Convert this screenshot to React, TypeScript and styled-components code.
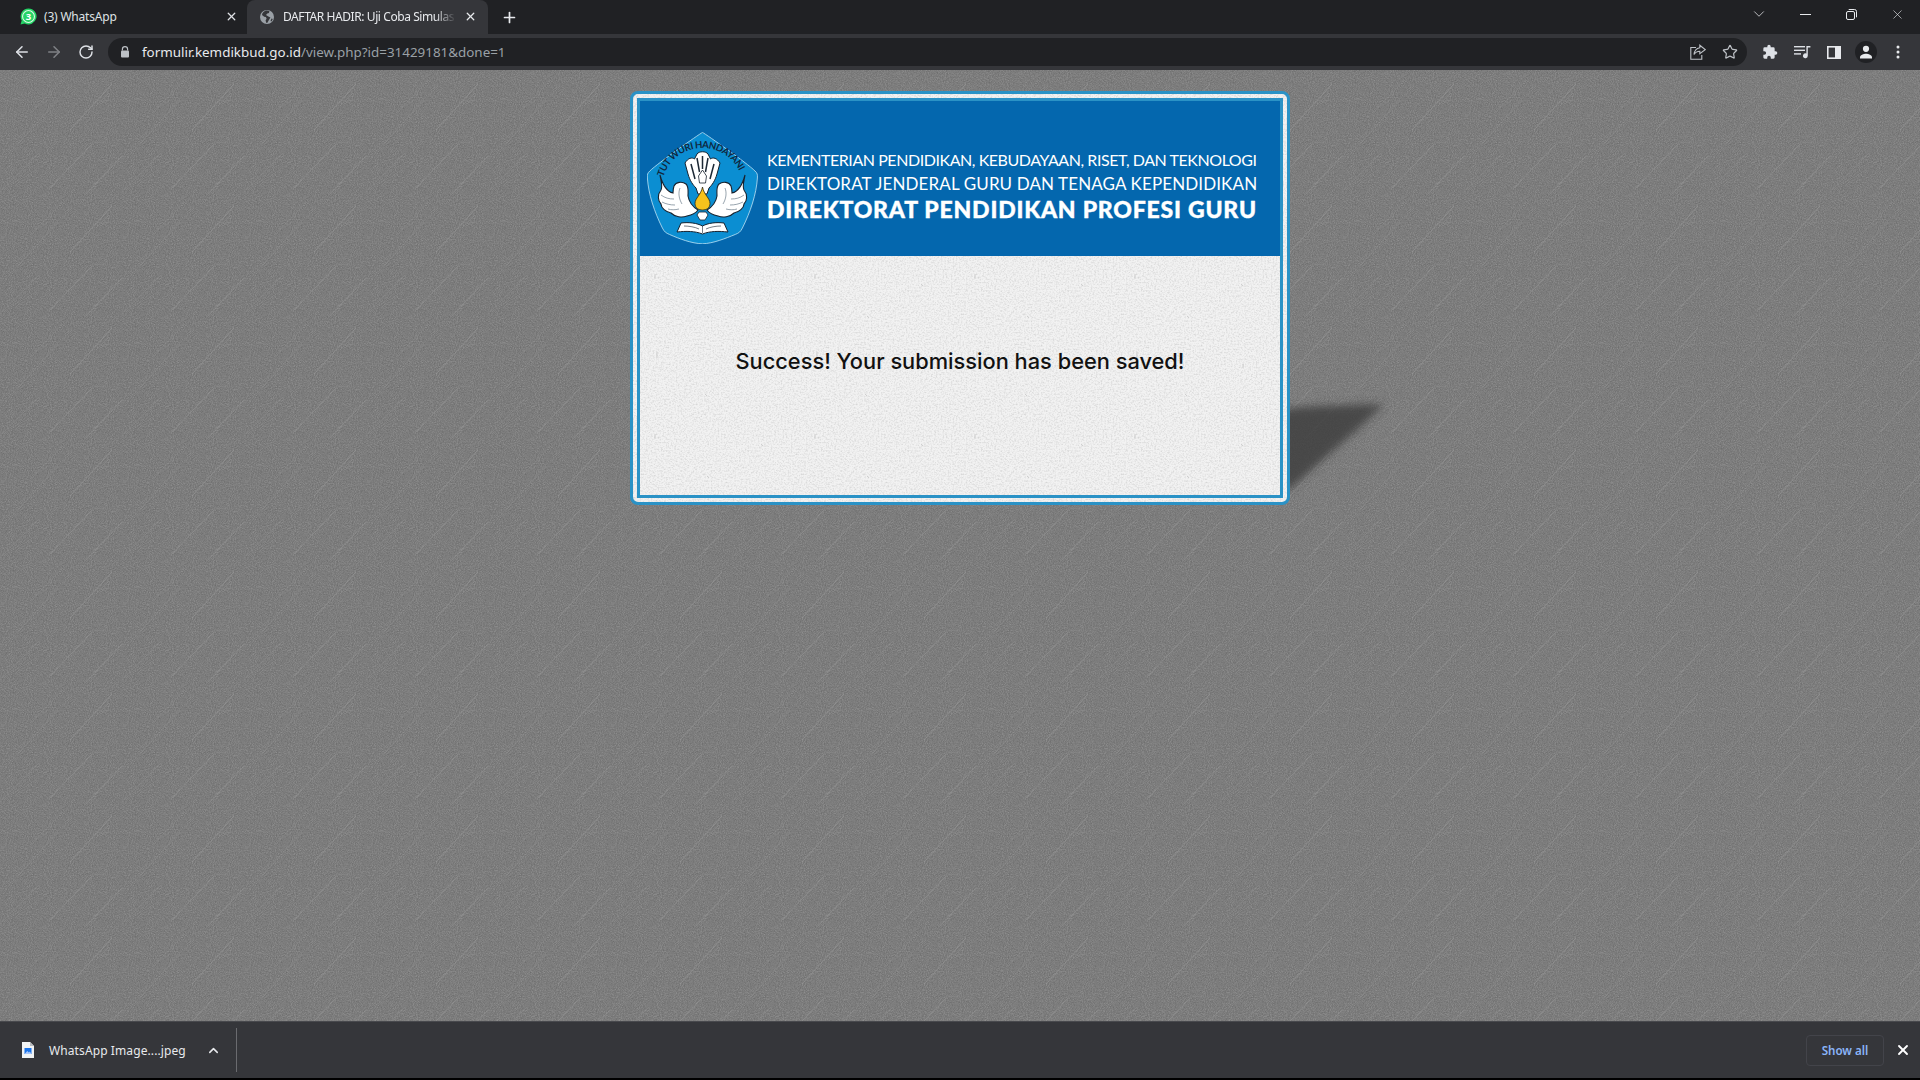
import React from "react";
import styled, { createGlobalStyle } from "styled-components";
import { ArrowLeft, ArrowRight, RotateCw, X, Plus, Star, ChevronDown, ChevronUp } from "lucide-react";

const svgUri = (s: string) => `url("data:image/svg+xml,${encodeURIComponent(s)}")`;

const scratches = [
  [12, 80, 58, 30], [70, 60, 112, 14], [0, 122, 40, 82], [88, 122, 124, 84], [30, 44, 62, 10], [50, 118, 92, 74], [96, 36, 108, 24],
];
const pageTile = svgUri(`<svg xmlns='http://www.w3.org/2000/svg' width='122' height='122'>
<filter id='n' x='0' y='0' width='100%' height='100%' color-interpolation-filters='sRGB'><feTurbulence type='fractalNoise' baseFrequency='0.95' numOctaves='2' seed='4' stitchTiles='stitch'/><feColorMatrix values='0 0 0 0 0.6 0 0 0 0 0.6 0 0 0 0 0.6 1.5 0 0 0 -0.62'/></filter>
<filter id='m' x='0' y='0' width='100%' height='100%' color-interpolation-filters='sRGB'><feTurbulence type='fractalNoise' baseFrequency='0.8' numOctaves='2' seed='9' stitchTiles='stitch'/><feColorMatrix values='0 0 0 0 0.4 0 0 0 0 0.4 0 0 0 0 0.4 0 1.5 0 0 -0.62'/></filter>
<rect width='122' height='122' fill='#7b7b7b'/>
<rect width='122' height='122' filter='url(#m)'/>
<rect width='122' height='122' filter='url(#n)'/>
${scratches.map(([a, b, c, d], i) => `<line x1='${a}' y1='${b}' x2='${c}' y2='${d}' stroke='#a0a0a0' stroke-opacity='${i % 2 ? 0.42 : 0.22}' stroke-width='1'/>`).join("")}
</svg>`);

const paperTile = svgUri(`<svg xmlns='http://www.w3.org/2000/svg' width='160' height='160'>
<filter id='p' x='0' y='0' width='100%' height='100%' color-interpolation-filters='sRGB'><feTurbulence type='fractalNoise' baseFrequency='0.6' numOctaves='3' seed='3' stitchTiles='stitch'/><feColorMatrix values='0 0 0 0 0.8 0 0 0 0 0.8 0 0 0 0 0.8 0 1.5 0 0 -0.62'/></filter>
<rect width='160' height='160' fill='#f2f2f2'/><rect width='160' height='160' filter='url(#p)'/>
<path d='M22 20v5M74 62l2 2M24 98v5M72 140l2 2M128 30l2 2M130 110v4' stroke='#cfcfcf' stroke-width='1' fill='none'/>
</svg>`);

const Global = createGlobalStyle`
  html, body { margin: 0; padding: 0; height: 100%; overflow: hidden; background: #000; }
  #root { height: 100%; }
  * { box-sizing: border-box; }
`;

const Screen = styled.div`
  width: 1920px;
  height: 1080px;
  display: flex;
  flex-direction: column;
  font-family: "Noto Sans", "Liberation Sans", sans-serif;
  background: #000;
`;

const TabStrip = styled.div`
  height: 34px;
  background: #202124;
  display: flex;
  align-items: stretch;
  padding-left: 8px;
  position: relative;
`;

const Tab = styled.div<{ $active?: boolean }>`
  width: ${(p) => (p.$active ? "241px" : "239px")};
  height: 34px;
  display: flex;
  align-items: center;
  padding: 0 ${(p) => (p.$active ? "11px" : "9px")} 0 12px;
  background: ${(p) => (p.$active ? "#35363a" : "transparent")};
  border-radius: ${(p) => (p.$active ? "8px 8px 0 0" : "0")};
  color: ${(p) => (p.$active ? "#e8eaed" : "#dfe1e5")};
  font-size: 12px;
  gap: ${(p) => (p.$active ? "8px" : "7px")};
  padding-bottom: 1px;
`;

const TabLabel = styled.span<{ $fade?: boolean }>`
  flex: 1;
  white-space: nowrap;
  overflow: hidden;
  letter-spacing: ${(p) => (p.$fade ? "-0.42px" : "-0.2px")};
  ${(p) => p.$fade && "mask-image: linear-gradient(90deg, #000 88%, transparent 100%);"}
`;

const NewTab = styled.div`
  width: 42px;
  display: flex;
  align-items: center;
  justify-content: center;
  color: #e8eaed;
`;

const Spacer = styled.div`
  flex: 1;
`;

const WindowControls = styled.div`
  display: flex;
  align-items: center;
  padding-bottom: 6px;
  color: #e8eaed;
`;

const WindowButton = styled.div`
  width: 46px;
  display: flex;
  justify-content: center;
  align-items: center;
`;

const Toolbar = styled.div`
  height: 36px;
  background: #35363a;
  display: flex;
  align-items: center;
  padding-left: 8px;
`;

const NavButton = styled.div<{ $dim?: boolean; $w: number }>`
  width: ${(p) => p.$w}px;
  display: flex;
  align-items: center;
  justify-content: center;
  color: ${(p) => (p.$dim ? "#7f8185" : "#dee1e6")};
`;

const Omnibox = styled.div`
  width: 1639px;
  height: 28px;
  margin-left: 8px;
  background: #202124;
  border-radius: 14px;
  display: flex;
  align-items: center;
  padding-left: 12px;
  color: #bdc1c6;
`;

const Url = styled.div`
  margin-left: 12px;
  font-size: 13.4px;
  color: #9aa0a6;
  flex: 1;
  white-space: nowrap;
`;

const UrlHost = styled.span`
  color: #e8eaed;
`;

const OmniIcons = styled.div`
  display: flex;
  align-items: center;
  gap: 16px;
  padding-right: 9px;
  color: #bdc1c6;
`;

const ToolIcons = styled.div`
  display: flex;
  align-items: center;
  margin-left: 6px;
  color: #e8eaed;
`;

const Avatar = styled.div`
  width: 22px;
  height: 22px;
  border-radius: 50%;
  background: #202124;
  display: flex;
  align-items: center;
  justify-content: center;
`;

const Page = styled.main`
  flex: 1;
  background-color: #7b7b7b;
  background-image: ${pageTile};
  background-size: 122px 122px;
  display: flex;
  flex-direction: column;
  align-items: center;
  padding-top: 21px;
`;

const CardWrap = styled.div`
  position: relative;
  width: 660px;
  height: 414px;
`;

const Shadow = styled.svg`
  position: absolute;
  left: 650px;
  top: 300px;
`;

const Card = styled.section`
  position: relative;
  height: 100%;
  border: 3px solid #2a92c6;
  border-radius: 8px;
  padding: 4px;
  background: #f0f0f0 ${paperTile};
`;

const CardInner = styled.div`
  height: 100%;
  border: 3px solid #2a92c6;
  display: flex;
  flex-direction: column;
`;

const Banner = styled.header`
  height: 155px;
  flex: none;
  background: #0467ae;
  display: flex;
  align-items: flex-start;
  padding: 31px 0 0 7px;
  gap: 9px;
`;

const BannerText = styled.div`
  display: flex;
  flex-direction: column;
  color: #fff;
  font-family: Lato, "Noto Sans", sans-serif;
  white-space: nowrap;
  padding-top: 16px;
`;

const BannerLine = styled.div<{ $size: number; $spacing: number; $bold?: boolean; $height: number }>`
  font-size: ${(p) => p.$size}px;
  letter-spacing: ${(p) => p.$spacing}px;
  font-weight: ${(p) => (p.$bold ? 900 : 400)};
  line-height: ${(p) => p.$height}px;
  ${(p) => p.$bold && "-webkit-text-stroke: 0.4px #fff;"}
`;

const CardBody = styled.div`
  flex: 1;
  display: flex;
  align-items: flex-start;
  justify-content: center;
  padding-top: 90px;
`;

const Message = styled.p`
  margin: 0;
  font-family: Inter, "Noto Sans", sans-serif;
  font-size: 21.8px;
  line-height: 30px;
  font-weight: 500;
  color: #111;
`;

const DownloadBar = styled.footer`
  height: 57px;
  background: #35363a;
  border-top: 1px solid #48494d;
  display: flex;
  align-items: center;
  color: #e8eaed;
`;

const DownloadItem = styled.div`
  width: 237px;
  height: 44px;
  display: flex;
  align-items: center;
  padding-left: 22px;
  border-right: 1px solid #6a6b6f;
  font-size: 12px;
`;

const FileName = styled.span`
  margin-left: 15px;
  width: 157px;
  letter-spacing: 0.1px;
  color: #e8eaed;
`;

const ShowAll = styled.button`
  width: 78px;
  height: 31px;
  margin-right: 5px;
  background: transparent;
  border: 1px solid #43444a;
  border-radius: 4px;
  color: #8ab4f8;
  font: 600 11.6px "Noto Sans", sans-serif;
  padding: 0;
`;

const BarClose = styled.div`
  width: 27px;
  margin-right: 4px;
  display: flex;
  justify-content: center;
  color: #fff;
`;

const BottomEdge = styled.div`
  height: 2px;
  flex: none;
`;

const WhatsAppIcon = () => (
  <svg width="17" height="17" viewBox="0 0 16 16">
    <path d="M8 .4a7.5 7.5 0 0 0-6.4 11.3L.5 15.6l4-1.1A7.5 7.5 0 1 0 8 .4z" fill="#25d366" />
    <circle cx="8" cy="8" r="5.6" fill="none" stroke="#fff" strokeWidth="1" strokeOpacity="0.85" />
    <text x="8" y="11.2" textAnchor="middle" fontSize="9" fontWeight="700" fontFamily="Noto Sans, sans-serif" fill="#fff">3</text>
  </svg>
);

const GlobeIcon = () => (
  <svg width="16" height="16" viewBox="0 0 16 16">
    <circle cx="8" cy="8" r="7" fill="#9aa0a6" />
    <path d="M7 1.6C5 2.4 3 4 3 6l2.2 1.7 1.6.3.8 1.6-1 2 .6 2.2 1 .2 2-3.4 1.2-2-2-1.2L7 6l1.3-1.4L10 4l.4-2A7 7 0 0 0 7 1.6zM12.5 9.5l-1 2.5 1 .4 1.3-2.4z" fill="#35363a" />
  </svg>
);

const LockIcon = () => (
  <svg width="10" height="12" viewBox="0 0 10 12">
    <path d="M2.4 4.6V3.2a2.6 2.6 0 0 1 5.2 0v1.4" fill="none" stroke="#bdc1c6" strokeWidth="1.2" />
    <rect x="1" y="4.6" width="8" height="6.8" rx="1" fill="#bdc1c6" />
  </svg>
);

const RestoreIcon = () => (
  <svg width="11" height="11" viewBox="0 0 11 11" fill="none" stroke="currentColor" strokeWidth="1">
    <rect x=".5" y="2.5" width="8" height="8" rx="1.5" />
    <path d="M2.7 .5h5.8a2 2 0 0 1 2 2v5.8" />
  </svg>
);

const ShareIcon = () => (
  <svg width="16" height="16" viewBox="0 0 16 16" fill="none" stroke="currentColor" strokeWidth="1.1">
    <path d="M6 3.5H.8v11.7h11V11" />
    <path d="M9.8 1.2 15.2 5.6 9.8 9.6V7.2C7 7.2 5.2 8.4 4 10.6 4.4 7 6.4 4.3 9.8 3.8z" />
  </svg>
);

const PuzzleIcon = () => (
  <svg width="16" height="16" viewBox="0 0 24 24" fill="currentColor">
    <path d="M20.5 11H19V7a2 2 0 0 0-2-2h-4V3.5a2.5 2.5 0 0 0-5 0V5H4a2 2 0 0 0-2 2v3.8h1.5a2.7 2.7 0 0 1 0 5.4H2V20a2 2 0 0 0 2 2h3.8v-1.5a2.7 2.7 0 0 1 5.4 0V22H17a2 2 0 0 0 2-2v-4h1.5a2.5 2.5 0 0 0 0-5z" />
  </svg>
);

const QueueIcon = () => (
  <svg width="17" height="14" viewBox="0 0 17 14" fill="currentColor">
    <rect x="0" y="1" width="11" height="1.4" />
    <rect x="0" y="4.6" width="11" height="1.4" />
    <rect x="0" y="8.2" width="7" height="1.4" />
    <path d="M12.4 1h4v1.6h-2.6v8.2a2.4 2.4 0 1 1-1.4-2.2z" />
  </svg>
);

const SidePanelIcon = () => (
  <svg width="14" height="13" viewBox="0 0 14 13">
    <rect width="14" height="13" fill="#e8eaed" />
    <rect x="1.6" y="1.6" width="6.4" height="9.8" fill="#35363a" />
  </svg>
);

const PersonIcon = () => (
  <svg width="14" height="14" viewBox="0 0 14 14" fill="#e8eaed">
    <circle cx="7" cy="3.8" r="3.1" />
    <path d="M1 13.4v-1.2C1 10 4.6 8.7 7 8.7s6 1.3 6 3.5v1.2z" />
  </svg>
);

const DotsIcon = () => (
  <svg width="4" height="14" viewBox="0 0 4 14" fill="#e8eaed">
    <circle cx="2" cy="2" r="1.5" />
    <circle cx="2" cy="7" r="1.5" />
    <circle cx="2" cy="12" r="1.5" />
  </svg>
);

const FileIcon = () => (
  <svg width="12" height="16" viewBox="0 0 12 16">
    <path d="M0 0h8l4 4v12H0z" fill="#f1f3f4" />
    <path d="M8 0l4 4H8z" fill="#b8babd" />
    <rect x="2.5" y="6" width="7" height="6" fill="#1a73e8" />
    <path d="M2.5 12l2.8-3 1.6 1.6 1-1 1.6 2.4z" fill="#a8c7fa" />
  </svg>
);

const EMBLEM_INK = "#16222f";

const Wing = () => (
  <g>
    <path
      d="M13 43C14 50 16 54 14 58C10 63 11 69 14 72C14 76 19 80 24 81C28 85 35 86 40 84C45 83 49 81 51 78C46 75 42 70 41 64C41 59 42 55 39 52C35 49 29 50 27 54C26 57 26 59 26 61C21 60 16 54 13 43Z"
      fill="#fff"
      stroke={EMBLEM_INK}
      strokeWidth="1.1"
    />
    <path d="M14 63c4 3 8 4 13 4M15 70c4 2 8 3 13 3M21 77c3 1 7 1 11 0M33 56c-2 5-1 11 2 16" fill="none" stroke="#6c7d8b" strokeWidth="0.7" />
  </g>
);

const Emblem = () => (
  <svg width="111" height="112" viewBox="0 0 111 112" style={{ flex: "none" }}>
    <path
      d="M55.5.4C60 3 100 31 108 39c2.4 2.2 2.6 3.6 2.4 7-1 16-7 34-15 50-2 4-3.6 5-7 6.4-10 4-22 9-33 9.4-11-.4-23-5-33-9.4-3.4-1.4-5-2.4-7-6.4-8-16-14-34-15-50-.2-3.4 0-4.8 2.4-7C11 31 51 3 55.5.4z"
      fill="#0b8ed2"
      stroke="#bfe3f5"
      strokeWidth="0.8"
    />
    <path id="emblem-arc" d="M16 46A41 41 0 0 1 95 46" fill="none" />
    <text fontFamily="Lato, sans-serif" fontWeight="700" fontSize="9.6" fill="#10283f" textLength="98" lengthAdjust="spacing">
      <textPath href="#emblem-arc" startOffset="1">TUT WURI HANDAYANI</textPath>
    </text>
    <path
      d="M38 31C41 26 45 25 47.5 27L50 22C52 19 59 19 61 22L63.5 27C66 25 70 26 73 31L70 42C68 49 65 53 62 56L60 62H51L49 56C46 53 43 49 41 42Z"
      fill="#fff"
      stroke={EMBLEM_INK}
      strokeWidth="1"
    />
    <path d="M44 32l4 15M50 26l2.5 14M55.5 24v13M61 26l-2.5 14M67 32l-4 15" stroke="#1c2835" strokeWidth="1.5" fill="none" />
    <path d="M55.5 38l4 6-1 7h-6l-1-7z" fill="#fff" stroke={EMBLEM_INK} strokeWidth="0.8" />
    <Wing />
    <g transform="translate(111 0) scale(-1 1)">
      <Wing />
    </g>
    <path d="M55.5 55C57 63 63 66 63 71.5C63 76 59.5 78 55.5 78C51.5 78 48 76 48 71.5C48 66 54 63 55.5 55Z" fill="#f6c21c" stroke="#2f2a12" strokeWidth="0.8" />
    <path d="M52 80h7l2 3-3 5h-5l-3-5z" fill="#fff" stroke={EMBLEM_INK} strokeWidth="0.8" />
    <path d="M30 100l4-9c8-1 16 0 21.5 3 5.500-3 13.500-4 21.500-3l4 9c-9-1-18-1-25.500 2-7.500-3-16.500-3-25.500-2z" fill="#fff" stroke={EMBLEM_INK} strokeWidth="1" />
    <path d="M55.500 94v7M37 94c5 0 11 1 15 3M74 94c-5 0-11 1-15 3" stroke={EMBLEM_INK} strokeWidth="0.6" fill="none" />
  </svg>
);

export default function App() {
  return (
    <Screen>
      <Global />
      <TabStrip>
        <Tab>
          <WhatsAppIcon />
          <TabLabel>(3) WhatsApp</TabLabel>
          <X size={13} strokeWidth={2.4} />
        </Tab>
        <Tab $active>
          <GlobeIcon />
          <TabLabel $fade>DAFTAR HADIR: Uji Coba Simulas</TabLabel>
          <X size={13} strokeWidth={2.4} />
        </Tab>
        <NewTab>
          <Plus size={17} strokeWidth={2.4} />
        </NewTab>
        <Spacer />
        <WindowControls>
          <WindowButton>
            <ChevronDown size={18} strokeWidth={1} />
          </WindowButton>
          <WindowButton>
            <svg width="11" height="1" viewBox="0 0 11 1"><rect width="11" height="1" fill="currentColor" /></svg>
          </WindowButton>
          <WindowButton>
            <RestoreIcon />
          </WindowButton>
          <WindowButton>
            <X size={15} strokeWidth={1} />
          </WindowButton>
        </WindowControls>
      </TabStrip>
      <Toolbar>
        <NavButton $w={28}>
          <ArrowLeft size={18} strokeWidth={2.1} />
        </NavButton>
        <NavButton $dim $w={36}>
          <ArrowRight size={18} strokeWidth={2.1} />
        </NavButton>
        <NavButton $w={28}>
          <RotateCw size={16} strokeWidth={2.2} />
        </NavButton>
        <Omnibox>
          <LockIcon />
          <Url>
            <UrlHost>formulir.kemdikbud.go.id</UrlHost>/view.php?id=31429181&amp;done=1
          </Url>
          <OmniIcons>
            <ShareIcon />
            <Star size={16} strokeWidth={1.8} />
          </OmniIcons>
        </Omnibox>
        <ToolIcons>
          <NavButton $w={33}><PuzzleIcon /></NavButton>
          <NavButton $w={32}><QueueIcon /></NavButton>
          <NavButton $w={31}><SidePanelIcon /></NavButton>
          <NavButton $w={33}><Avatar><PersonIcon /></Avatar></NavButton>
          <NavButton $w={31}><DotsIcon /></NavButton>
        </ToolIcons>
      </Toolbar>
      <Page>
        <CardWrap>
          <Shadow width="120" height="120" viewBox="0 0 120 120">
            <defs>
              <filter id="shadow-blur" x="-20%" y="-20%" width="140%" height="140%">
                <feGaussianBlur stdDeviation="4" />
              </filter>
            </defs>
            <polygon points="0,18 40,15 104,13 80,36 10,98 0,100" fill="#3c3c3c" fillOpacity="0.8" filter="url(#shadow-blur)" />
          </Shadow>
          <Card>
            <CardInner>
              <Banner>
                <Emblem />
                <BannerText>
                  <BannerLine $size={16} $spacing={-0.44} $height={24}>
                    KEMENTERIAN PENDIDIKAN, KEBUDAYAAN, RISET, DAN TEKNOLOGI
                  </BannerLine>
                  <BannerLine $size={17} $spacing={0.12} $height={24}>
                    DIREKTORAT JENDERAL GURU DAN TENAGA KEPENDIDIKAN
                  </BannerLine>
                  <BannerLine $size={23} $spacing={0.78} $bold $height={26}>
                    DIREKTORAT PENDIDIKAN PROFESI GURU
                  </BannerLine>
                </BannerText>
              </Banner>
              <CardBody>
                <Message>Success! Your submission has been saved!</Message>
              </CardBody>
            </CardInner>
          </Card>
        </CardWrap>
      </Page>
      <DownloadBar>
        <DownloadItem>
          <FileIcon />
          <FileName>WhatsApp Image....jpeg</FileName>
          <ChevronUp size={15} strokeWidth={2.4} />
        </DownloadItem>
        <Spacer />
        <ShowAll>Show all</ShowAll>
        <BarClose>
          <X size={16} strokeWidth={2.8} />
        </BarClose>
      </DownloadBar>
      <BottomEdge />
    </Screen>
  );
}
